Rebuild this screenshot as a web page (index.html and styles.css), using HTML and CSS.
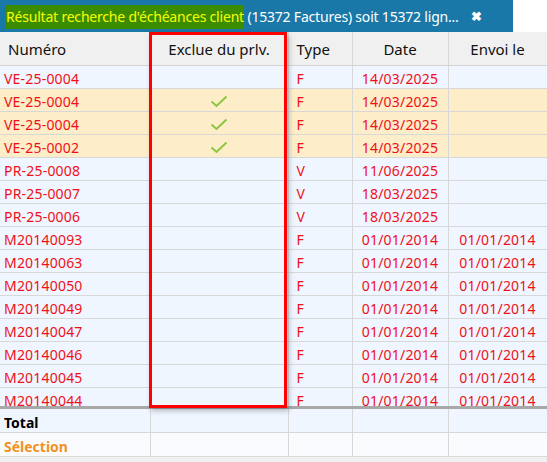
FILE: index.html
```html
<!DOCTYPE html>
<html lang="fr">
<head>
    <meta charset="UTF-8">
    <title>Résultat recherche d'échéances client</title>
    <link rel="stylesheet" href="styles.css">
</head>
<body>

<!-- onglet du résultat -->
<div class="tabbar">
    <div class="tab">
        <span class="tab-title"><span class="hl">Résultat recherche d'échéances client</span> (15372 Factures) soit 15372 lign...</span>
        <span class="tab-close">✖</span>
    </div>
    <div class="tab-rest"></div>
</div>

<div class="grid">
    <table class="head">
        <colgroup><col class="c1"><col class="c2"><col class="c3"><col class="c4"><col class="c5"></colgroup>
        <tr>
            <th class="left">Numéro</th>
            <th>Exclue du prlv.</th>
            <th class="left">Type</th>
            <th>Date</th>
            <th>Envoi le</th>
        </tr>
    </table>

    <div class="body">
        <table class="rows">
            <colgroup><col class="c1"><col class="c2"><col class="c3"><col class="c4"><col class="c5"></colgroup>
            <tr><td>VE-25-0004</td><td class="mid"></td><td>F</td><td class="mid">14/03/2025</td><td class="mid"></td></tr>
            <tr class="sel"><td>VE-25-0004</td><td class="mid"><svg class="check" width="18" height="13" viewBox="0 0 18 13"><path d="M1.5 6.5 L6.5 11 L16.5 1.5" fill="none" stroke="#8cc63f" stroke-width="2"/></svg></td><td>F</td><td class="mid">14/03/2025</td><td class="mid"></td></tr>
            <tr class="sel"><td>VE-25-0004</td><td class="mid"><svg class="check" width="18" height="13" viewBox="0 0 18 13"><path d="M1.5 6.5 L6.5 11 L16.5 1.5" fill="none" stroke="#8cc63f" stroke-width="2"/></svg></td><td>F</td><td class="mid">14/03/2025</td><td class="mid"></td></tr>
            <tr class="sel"><td>VE-25-0002</td><td class="mid"><svg class="check" width="18" height="13" viewBox="0 0 18 13"><path d="M1.5 6.5 L6.5 11 L16.5 1.5" fill="none" stroke="#8cc63f" stroke-width="2"/></svg></td><td>F</td><td class="mid">14/03/2025</td><td class="mid"></td></tr>
            <tr><td>PR-25-0008</td><td class="mid"></td><td>V</td><td class="mid">11/06/2025</td><td class="mid"></td></tr>
            <tr><td>PR-25-0007</td><td class="mid"></td><td>V</td><td class="mid">18/03/2025</td><td class="mid"></td></tr>
            <tr><td>PR-25-0006</td><td class="mid"></td><td>V</td><td class="mid">18/03/2025</td><td class="mid"></td></tr>
            <tr><td>M20140093</td><td class="mid"></td><td>F</td><td class="mid">01/01/2014</td><td class="mid">01/01/2014</td></tr>
            <tr><td>M20140063</td><td class="mid"></td><td>F</td><td class="mid">01/01/2014</td><td class="mid">01/01/2014</td></tr>
            <tr><td>M20140050</td><td class="mid"></td><td>F</td><td class="mid">01/01/2014</td><td class="mid">01/01/2014</td></tr>
            <tr><td>M20140049</td><td class="mid"></td><td>F</td><td class="mid">01/01/2014</td><td class="mid">01/01/2014</td></tr>
            <tr><td>M20140047</td><td class="mid"></td><td>F</td><td class="mid">01/01/2014</td><td class="mid">01/01/2014</td></tr>
            <tr><td>M20140046</td><td class="mid"></td><td>F</td><td class="mid">01/01/2014</td><td class="mid">01/01/2014</td></tr>
            <tr><td>M20140045</td><td class="mid"></td><td>F</td><td class="mid">01/01/2014</td><td class="mid">01/01/2014</td></tr>
            <tr><td>M20140044</td><td class="mid"></td><td>F</td><td class="mid">01/01/2014</td><td class="mid">01/01/2014</td></tr>
        </table>
    </div>

    <table class="foot">
        <colgroup><col class="c1"><col class="c2"><col class="c3"><col class="c4"><col class="c5"></colgroup>
        <tr class="total"><td>Total</td><td></td><td></td><td></td><td></td></tr>
        <tr class="selection"><td>Sélection</td><td></td><td></td><td></td><td></td></tr>
    </table>

    <!-- cadre rouge autour de la colonne -->
    <div class="mark"></div>
</div>

</body>
</html>
```

FILE: styles.css
```css
body {
    margin: 0;
    padding: 0;
    font-family: "Noto Sans", "Open Sans", sans-serif;
    background-color: #f0f0f0;
    overflow: hidden;
}
.tabbar {
    display: flex;
    height: 32px;
    background-color: #ffffff;
}
.tab {
    width: 513px;
    background-color: #1a78a8;
    display: flex;
    align-items: center;
    color: #ffffff;
    font-size: 14px;
    padding-left: 6px;
    box-sizing: border-box;
}
.tab-title {
    white-space: nowrap;
    letter-spacing: -0.2px;
}
.hl {
    background-color: #3c8c00;
    color: #f6ff00;
    padding: 2px 0 3px 0;
}
.tab-close {
    margin-left: 12px;
    font-size: 13px;
    font-weight: bold;
}
.tab-rest {
    flex: 1;
}
.grid {
    position: relative;
}
table {
    border-collapse: collapse;
    table-layout: fixed;
    width: 547px;
}
.c1 { width: 150px; }
.c2 { width: 138px; }
.c3 { width: 64px; }
.c4 { width: 96px; }
.c5 { width: 99px; }
.head th {
    height: 32px;
    padding: 1px 0 0 0;
    font-weight: normal;
    font-size: 15px;
    color: #111111;
    background-color: #f0f0f0;
    border-right: 1px solid #d8d8d8;
    border-bottom: 1px solid #d4d4d4;
    text-align: center;
    white-space: nowrap;
}
.head th.left {
    text-align: left;
    padding-left: 8px;
}
.body {
    height: 340px;
    overflow: hidden;
    border-bottom: 3px solid #a8a8a8;
}
.rows td {
    height: 20px;
    padding: 2px 0 0 4px;
    font-size: 14px;
    letter-spacing: 0.2px;
    color: #f01018;
    background-color: #eff6ff;
    border-right: 1px solid #d8d8d8;
    border-bottom: 1px solid #d8d8d8;
    white-space: nowrap;
}
.rows td:nth-child(3) {
    padding-left: 8px;
}
.rows td.mid {
    text-align: center;
    padding: 2px 0 0 0;
}
.rows tr.sel td {
    background-color: #fdedc8;
}
.check {
    display: block;
    margin: 0 auto;
}
.foot td {
    height: 20px;
    padding: 3px 0 0 4px;
    font-size: 14px;
    font-weight: bold;
    border-right: 1px solid #d8d8d8;
    border-bottom: 1px solid #d8d8d8;
}
.total td {
    background-color: #eff6ff;
    color: #000000;
}
.selection td {
    background-color: #f9fbff;
    color: #f0921e;
}
.mark {
    position: absolute;
    left: 149px;
    top: 0;
    width: 132px;
    height: 370px;
    border: 3px solid #ff0000;
    box-shadow: 2px 3px 5px rgba(0, 0, 0, 0.25);
}
```
